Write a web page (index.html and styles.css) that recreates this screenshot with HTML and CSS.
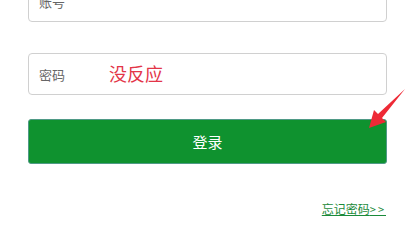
FILE: index.html
```html
<!DOCTYPE html>
<html lang="zh">
<head>
<meta charset="utf-8">
<link rel="stylesheet" href="styles.css">
</head>
<body>
<div class="form">
  <div class="field field-first"><span class="ph">账号</span></div>
  <div class="field field-second"><span class="ph">密码</span><span class="note">没反应</span></div>
  <button class="btn">登录</button>
  <div class="links"><a class="forgot" href="#">忘记密码<span class="gt">&gt;&gt;</span></a></div>
</div>
<svg class="arrow" width="419" height="222" viewBox="0 0 419 222">
  <polygon points="405,89 382,118 386,122 369,128 374,110 378,114" fill="#ee2a36"/>
</svg>
</body>
</html>
```
FILE: styles.css
```css
html, body {
  margin: 0;
  padding: 0;
  background: #fff;
  width: 419px;
  height: 222px;
  overflow: hidden;
  font-family: "Noto Sans CJK SC", "Noto Sans", sans-serif;
}
.form {
  margin-top: -20px;
  margin-left: 28px;
  width: 359px;
  display: flex;
  flex-direction: column;
}
.field {
  box-sizing: border-box;
  height: 42px;
  border: 1px solid #d0d0d0;
  border-radius: 4px;
  display: flex;
  align-items: center;
  padding-left: 10px;
}
.field-second {
  margin-top: 31px;
}
.ph {
  font-size: 13px;
  color: #666;
  width: 70px;
}
.note {
  font-size: 18px;
  color: #e33548;
  margin-top: -2px;
}
.btn {
  margin-top: 24px;
  box-sizing: border-box;
  height: 45px;
  width: 359px;
  border: 1px solid #4f9a86;
  border-radius: 3px;
  background: #0f922f;
  color: #fff;
  font-family: inherit;
  font-size: 15px;
  padding: 0;
}
.links {
  margin-top: 36px;
  display: flex;
  justify-content: flex-end;
}
.forgot {
  font-size: 12px;
  color: #1a8a3a;
  text-decoration: underline;
  margin-right: 1px;
}
.gt {
  letter-spacing: 2px;
  font-size: 11px;
}
.arrow {
  position: absolute;
  left: 0;
  top: 0;
  pointer-events: none;
}
```
